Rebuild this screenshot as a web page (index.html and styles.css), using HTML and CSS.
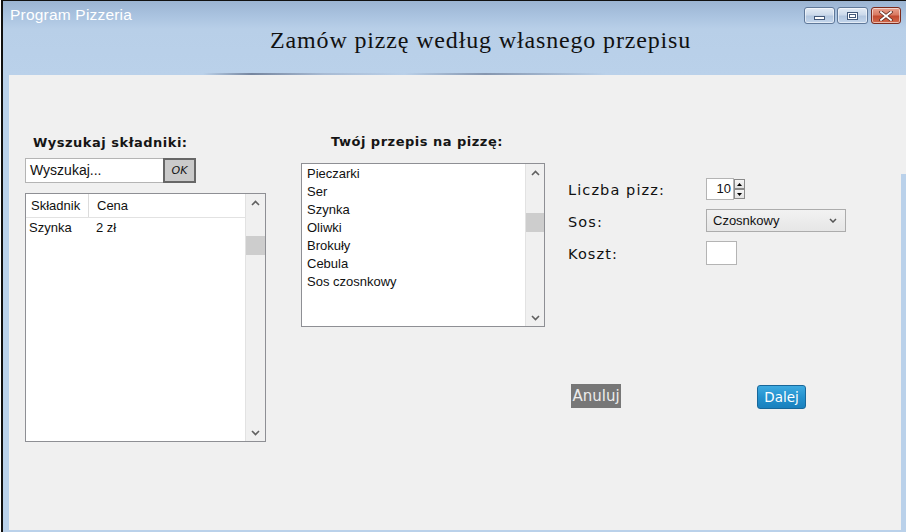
FILE: index.html
```html
<!DOCTYPE html>
<html lang="pl">
<head>
<meta charset="utf-8">
<title>Program Pizzeria</title>
<link rel="stylesheet" href="styles.css">
</head>
<body>
<div class="window">
  <header class="titlebar">
    <div class="caption-row">
      <span class="caption">Program Pizzeria</span>
      <div class="winbtns">
        <span class="wb wb-min"><i class="glyph-min"></i></span>
        <span class="wb wb-max"><i class="glyph-max"></i></span>
        <span class="wb wb-close">
          <svg width="14" height="10" viewBox="0 0 14 10"><path d="M2 1 L12 9 M12 1 L2 9" stroke="#5a2a20" stroke-width="3.4" stroke-linecap="square"/><path d="M2 1 L12 9 M12 1 L2 9" stroke="#fff" stroke-width="1.8" stroke-linecap="square"/></svg>
        </span>
      </div>
    </div>
    <h1 class="heading">Zamów pizzę według własnego przepisu</h1>
    <div class="title-shade"></div>
  </header>
  <div class="frame">
    <main class="content">
      <section class="col col-search">
        <h2 class="section-title">Wyszukaj składniki:</h2>
        <div class="search-row">
          <div class="search-input">Wyszukaj...</div>
          <div class="ok-btn">OK</div>
        </div>
        <div class="listview">
          <div class="lv-data">
            <div class="lv-head">
              <div class="lv-col lv-col1">Składnik</div>
              <div class="lv-col lv-col2">Cena</div>
            </div>
            <div class="lv-row">
              <div class="lv-cell lv-cell1">Szynka</div>
              <div class="lv-cell lv-cell2">2 zł</div>
            </div>
          </div>
          <div class="scrollbar sb-left">
            <svg class="arrow" width="9" height="6" viewBox="0 0 9 6"><path d="M1 5 L4.5 1.5 L8 5" fill="none" stroke="#606060" stroke-width="1.6"/></svg>
            <div class="thumb thumb-left"></div>
            <svg class="arrow arrow-down" width="9" height="6" viewBox="0 0 9 6"><path d="M1 1 L4.5 4.5 L8 1" fill="none" stroke="#606060" stroke-width="1.6"/></svg>
          </div>
        </div>
      </section>

      <section class="col col-recipe">
        <h2 class="section-title recipe-title">Twój przepis na pizzę:</h2>
        <div class="listbox">
          <ul class="items">
            <li>Pieczarki</li>
            <li>Ser</li>
            <li>Szynka</li>
            <li>Oliwki</li>
            <li>Brokuły</li>
            <li>Cebula</li>
            <li>Sos czosnkowy</li>
          </ul>
          <div class="scrollbar sb-mid">
            <svg class="arrow" width="9" height="6" viewBox="0 0 9 6"><path d="M1 5 L4.5 1.5 L8 5" fill="none" stroke="#606060" stroke-width="1.6"/></svg>
            <div class="thumb thumb-mid"></div>
            <svg class="arrow arrow-down" width="9" height="6" viewBox="0 0 9 6"><path d="M1 1 L4.5 4.5 L8 1" fill="none" stroke="#606060" stroke-width="1.6"/></svg>
          </div>
        </div>
      </section>

      <section class="col col-order">
        <div class="form-grid">
          <div class="label">Liczba pizz:</div>
          <div class="spinner">
            <div class="spin-box">10</div>
            <div class="spin-btns">
              <div class="spin-btn"><svg width="5" height="3" viewBox="0 0 5 3"><path d="M0 3 L2.5 0 L5 3Z" fill="#000"/></svg></div>
              <div class="spin-btn"><svg width="5" height="3" viewBox="0 0 5 3"><path d="M0 0 L2.5 3 L5 0Z" fill="#000"/></svg></div>
            </div>
          </div>
          <div class="label">Sos:</div>
          <div class="combo">
            <span>Czosnkowy</span>
            <svg width="8" height="5" viewBox="0 0 8 5"><path d="M1 1 L4 4 L7 1" fill="none" stroke="#555" stroke-width="1.5"/></svg>
          </div>
          <div class="label">Koszt:</div>
          <div class="cost-box"></div>
        </div>
        <div class="actions">
          <div class="btn-cancel">Anuluj</div>
          <div class="btn-next">Dalej</div>
        </div>
      </section>
    </main>
  </div>
</div>
</body>
</html>
```

FILE: styles.css
```css
* { box-sizing: border-box; }
html, body { margin: 0; padding: 0; }
body {
  width: 906px;
  height: 532px;
  overflow: hidden;
  background: #ffffff;
  font-family: "Liberation Sans", Arial, sans-serif;
}
.window {
  margin-left: 1px;
  width: 905px;
  height: 532px;
  border-left: 2px solid #101010;
  border-top: 1px solid #101010;
  display: flex;
  flex-direction: column;
}
.titlebar {
  height: 74px;
  flex: none;
  position: relative;
  background: linear-gradient(to bottom, #9bb4d2 0px, #a9c2df 14px, #b8cfe8 28px, #bad1ea 74px);
  padding-left: 7px;
}
.caption-row {
  height: 25px;
  display: flex;
  justify-content: space-between;
  align-items: flex-start;
}
.caption {
  margin-top: 5px;
  color: #ffffff;
  font-size: 15.5px;
  line-height: 18px;
  letter-spacing: 0.2px;
}
.winbtns {
  display: flex;
  gap: 2px;
  margin-top: 6px;
  margin-right: 5px;
}
.wb {
  width: 31px;
  height: 17px;
  border: 1px solid #5f7899;
  border-radius: 3px;
  display: flex;
  align-items: center;
  justify-content: center;
  background: linear-gradient(to bottom, #e4ecf6 0%, #ccdaeb 45%, #b3c7e0 55%, #c4d6ec 100%);
  box-shadow: inset 0 0 0 1px rgba(255,255,255,0.55);
}
.wb-close {
  width: 30px;
  margin-left: 1px;
  border-color: #7c2a1c;
  background: linear-gradient(to bottom, #e8a290 0%, #d97a62 45%, #c24a30 55%, #d26a4c 100%);
}
.glyph-min {
  display: block;
  width: 11px;
  height: 4px;
  margin-top: 5px;
  background: #fff;
  border: 1px solid #43597a;
}
.glyph-max {
  display: block;
  width: 11px;
  height: 8px;
  background: #fff;
  border: 1px solid #43597a;
  box-shadow: inset 0 0 0 1px #fff, inset 0 0 0 2px #43597a;
}
.wb-close svg { display: block; }
.heading {
  margin: 0 0 0 260px;
  font-family: "Liberation Serif", "Times New Roman", serif;
  font-weight: normal;
  font-size: 24px;
  line-height: 28px;
  letter-spacing: 0.85px;
  color: #111;
}
.title-shade {
  position: absolute;
  left: 200px;
  right: 300px;
  bottom: 0;
  height: 2px;
  background: linear-gradient(to right, rgba(120,135,160,0) 0%, rgba(110,125,150,0.9) 12%, rgba(150,165,190,0.5) 30%, rgba(185,205,230,0.2) 50%, rgba(120,135,160,0.8) 70%, rgba(120,135,160,0) 100%);
}
.frame {
  flex: 1;
  background: #bad1ea;
  padding: 0 0 2px 6px;
  display: flex;
}
.content {
  flex: 1;
  background: linear-gradient(#bad1ea, #bad1ea) no-repeat right bottom / 5px 356px, #f0f0f0;
  padding-top: 60px;
  display: flex;
  align-items: flex-start;
}
.col { display: flex; flex-direction: column; }
.section-title {
  margin: 0;
  font-family: "DejaVu Sans", Verdana, sans-serif;
  font-weight: bold;
  font-size: 13px;
  line-height: 16px;
  letter-spacing: 0.5px;
  color: #151515;
}

/* left column */
.col-search {
  margin-left: 16px;
  width: 241px;
}
.col-search .section-title { padding-left: 8px; }
.search-row {
  margin-top: 7px;
  display: flex;
  height: 25px;
}
.search-input {
  width: 138px;
  height: 25px;
  background: #fff;
  border: 1px solid #b4b4b4;
  border-right: none;
  font-size: 14px;
  line-height: 23px;
  padding-left: 4px;
  color: #111;
}
.ok-btn {
  width: 33px;
  height: 25px;
  background: #cacaca;
  border: 2px solid #676767;
  font-family: "DejaVu Sans", Verdana, sans-serif;
  font-style: italic;
  font-size: 11px;
  line-height: 21px;
  text-align: center;
  color: #111;
}
.listview {
  margin-top: 10px;
  height: 249px;
  width: 241px;
  border: 1px solid #8e8f94;
  background: #fff;
  display: flex;
}
.lv-data { flex: 1; }
.lv-head {
  display: flex;
  height: 24px;
  border-bottom: 1px solid #e2e2e2;
  font-size: 13px;
  line-height: 23px;
  color: #111;
}
.lv-col1 {
  width: 63px;
  padding-left: 5px;
  border-right: 1px solid #dcdcdc;
}
.lv-col2 { padding-left: 8px; }
.lv-row {
  display: flex;
  height: 18px;
  font-size: 13px;
  line-height: 19px;
  color: #111;
}
.lv-cell1 { width: 70px; padding-left: 3px; }
.scrollbar {
  width: 20px;
  background: #f0f0f0;
  border-left: 1px solid #e2e2e2;
  display: flex;
  flex-direction: column;
  align-items: center;
}
.arrow { display: block; margin-top: 6px; }
.arrow-down { margin-top: auto; margin-bottom: 5px; }
.thumb {
  width: 19px;
  height: 19px;
  background: #cdcdcd;
}
.thumb-left { margin-top: 30px; }

/* middle column */
.col-recipe {
  margin-left: 35px;
  width: 244px;
}
.recipe-title { padding-left: 30px; margin-top: -1px; margin-bottom: 1px; }
.listbox {
  margin-top: 12px;
  height: 164px;
  width: 244px;
  border: 1px solid #8e8f94;
  background: #fff;
  display: flex;
}
.items {
  flex: 1;
  list-style: none;
  margin: 0;
  padding: 1px 0 0 5px;
  font-size: 13px;
  line-height: 18px;
  color: #111;
}
.sb-mid { width: 19px; }
.thumb-mid { margin-top: 37px; width: 18px; }

/* right column */
.col-order {
  margin-left: 23px;
  padding-top: 43px;
  flex: 1;
}
.form-grid {
  display: grid;
  grid-template-columns: 138px auto;
  row-gap: 9px;
  align-items: center;
  justify-items: start;
}
.label {
  font-family: "DejaVu Sans", Verdana, sans-serif;
  font-size: 14.5px;
  letter-spacing: 1.1px;
  color: #111;
  line-height: 20px;
  margin-top: 2px;
}
.spinner { display: flex; height: 22px; }
.spin-box {
  width: 28px;
  height: 22px;
  background: #fff;
  border: 1px solid #b4b4b4;
  font-size: 13px;
  line-height: 20px;
  text-align: right;
  padding-right: 2px;
  color: #111;
}
.spin-btns {
  display: flex;
  flex-direction: column;
  padding-top: 1px;
}
.spin-btn {
  width: 11px;
  height: 10px;
  border: 1px solid #8a8a8a;
  background: linear-gradient(#f6f6f6, #e2e2e2);
  display: flex;
  align-items: center;
  justify-content: center;
}
.spin-btn svg { display: block; }
.combo {
  width: 140px;
  height: 23px;
  border: 1px solid #acacac;
  background: linear-gradient(#f2f2f2, #e6e6e6);
  display: flex;
  align-items: center;
  justify-content: space-between;
  padding: 0 8px 0 6px;
  font-size: 13px;
  color: #111;
}
.combo svg { display: block; }
.cost-box {
  width: 31px;
  height: 24px;
  background: #fff;
  border: 1px solid #b4b4b4;
}
.actions {
  margin-top: 119px;
  display: flex;
  align-items: flex-start;
}
.btn-cancel {
  margin-left: 3px;
  width: 50px;
  height: 24px;
  background: #777777;
  color: #ececec;
  font-family: "DejaVu Sans", Verdana, sans-serif;
  font-size: 15px;
  line-height: 24px;
  text-align: center;
}
.btn-next {
  margin-left: 136px;
  margin-top: 1px;
  width: 49px;
  height: 24px;
  border: 1px solid #18679a;
  border-radius: 3px;
  background: linear-gradient(#3eaae0, #2492cf 50%, #1a80bd);
  color: #fff;
  font-family: "DejaVu Sans", Verdana, sans-serif;
  font-size: 13.5px;
  line-height: 22px;
  text-align: center;
}
```
